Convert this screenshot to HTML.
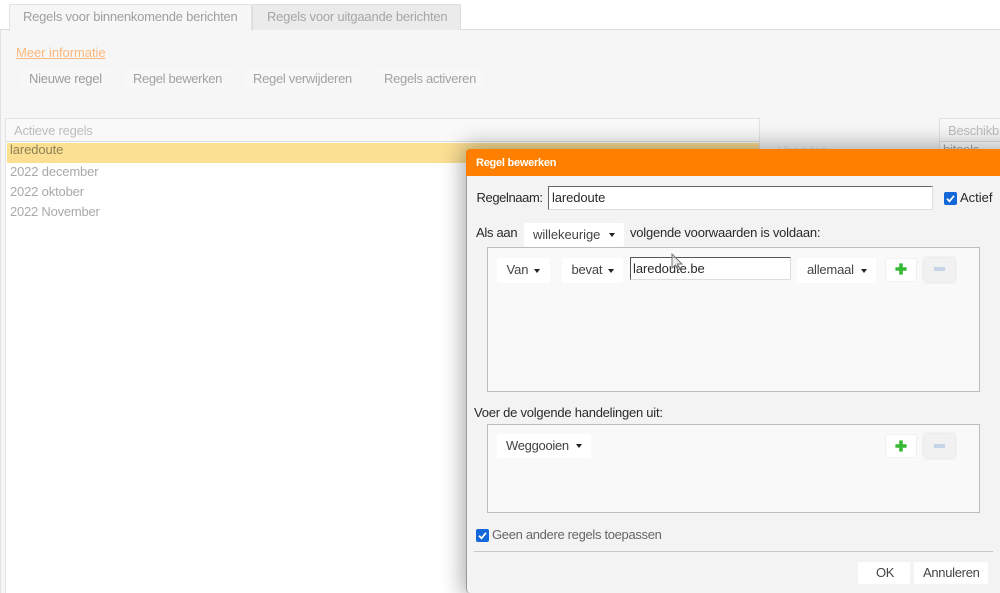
<!DOCTYPE html>
<html><head><meta charset="utf-8"><style>
html,body{margin:0;padding:0;width:1000px;height:593px;overflow:hidden;background:#fff}
body{position:relative;font-family:"Liberation Sans",sans-serif;font-size:13px;letter-spacing:-.22px}
.a{position:absolute;box-sizing:border-box}
.t{position:absolute;white-space:nowrap;line-height:16px}
.g{color:#a9a9a9}
.d{color:#2a2a2a}
.sel{position:absolute;box-sizing:border-box;background:#fff;border-radius:2px;color:#444}
.car{position:absolute;width:0;height:0;border-left:3.5px solid transparent;border-right:3.5px solid transparent;border-top:4px solid #222}
.cb{position:absolute;width:13px;height:13px;background:#1467d8;border-radius:2px}
.tb{position:absolute;box-sizing:border-box;background:#f7f7f7;border:1px solid #f4f4f4;border-radius:3px;top:66px;height:26px}
</style></head><body>
<div class="a" style="left:0;top:29px;width:1000px;height:564px;background:#f6f6f6;border-top:1px solid #dcdcdc;border-left:1px solid #e2e2e2"></div>
<div class="a" style="left:9px;top:4px;width:243px;height:27px;background:#f6f6f6;border:1px solid #e2e2e2;border-bottom:none;border-radius:2px 2px 0 0"></div>
<div class="a" style="left:252px;top:4px;width:209px;height:26px;background:#ebebeb;border:1px solid #dcdcdc;border-bottom:none;border-radius:2px 2px 0 0"></div>
<div class="t" style="left:23px;top:9px;color:#a0a0a0;letter-spacing:-.23px">Regels voor binnenkomende berichten</div>
<div class="t" style="left:267px;top:9px;color:#a6a6a6;letter-spacing:-.22px">Regels voor uitgaande berichten</div>
<div class="t" style="left:16px;top:45px;color:#fbb77a;text-decoration:underline;letter-spacing:-.05px">Meer informatie</div>
<div class="tb" style="left:18px;width:95px"></div>
<div class="tb" style="left:122px;width:111px"></div>
<div class="tb" style="left:243px;width:120px"></div>
<div class="tb" style="left:373px;width:112px"></div>
<div class="t" style="left:29px;top:71px;color:#9c9c9c;letter-spacing:-.25px">Nieuwe regel</div>
<div class="t" style="left:133px;top:71px;color:#a2a2a2;letter-spacing:-.35px">Regel bewerken</div>
<div class="t" style="left:253px;top:71px;color:#a2a2a2;letter-spacing:-.3px">Regel verwijderen</div>
<div class="t" style="left:384px;top:71px;color:#a2a2a2;letter-spacing:-.3px">Regels activeren</div>
<div class="a" style="left:5px;top:118px;width:755px;height:475px;background:#fff;border:1px solid #e2e2e2;border-bottom:none"></div>
<div class="a" style="left:6px;top:119px;width:753px;height:23px;background:#f9f9f9;border-bottom:1px solid #dcdcdc"></div>
<div class="t" style="left:14px;top:123px;color:#bdbdbd">Actieve regels</div>
<div class="a" style="left:7px;top:143px;width:752px;height:20px;background:#fbdf93"></div>
<div class="t" style="left:10px;top:142px;color:#8f8255;letter-spacing:-.1px">laredoute</div>
<div class="t g" style="left:10px;top:164px;letter-spacing:-.15px">2022 december</div>
<div class="t g" style="left:10px;top:184px;letter-spacing:-.17px">2022 oktober</div>
<div class="t g" style="left:10px;top:204px;letter-spacing:-.22px">2022 November</div>
<div class="a" style="left:939px;top:118px;width:61px;height:475px;background:#fff;border:1px solid #e2e2e2;border-right:none"></div>
<div class="a" style="left:940px;top:119px;width:60px;height:23px;background:#f7f7f7;border-bottom:1px solid #dcdcdc"></div>
<div class="t" style="left:948px;top:123px;color:#bdbdbd">Beschikb</div>
<div class="t g" style="left:943px;top:142px">bitools</div>
<div class="t" style="left:778px;top:143px;color:#dddddd">Voeg toe</div>

<div class="a" style="left:466px;top:149px;width:560px;height:444px;background:#f3f3f3;border-radius:4px 0 0 4px;box-shadow:0 0 22px 4px rgba(0,0,0,.32);border-left:1px solid #999"></div>
<div class="a" style="left:466px;top:149px;width:534px;height:27px;background:#ff8000;border-radius:4px 0 0 0"></div>
<div class="t" style="left:476px;top:155px;color:#fff;font-size:11px;font-weight:bold;letter-spacing:-.25px">Regel bewerken</div>

<div class="t d" style="left:476.5px;top:190px;letter-spacing:-.4px">Regelnaam:</div>
<div class="a" style="left:548px;top:186px;width:385px;height:24px;background:#fff;border:1px solid #ddd;border-top:1px solid #666;border-left:1px solid #666"></div>
<div class="t d" style="left:552px;top:190px;letter-spacing:-.1px">laredoute</div>
<div class="cb" style="left:944px;top:192px"><svg width="13" height="13" viewBox="0 0 13 13" style="display:block"><path d="M3 6.8 5.5 9.3 10 3.8" fill="none" stroke="#fff" stroke-width="1.8"/></svg></div>
<div class="t d" style="left:960px;top:190px;letter-spacing:0">Actief</div>

<div class="t d" style="left:476px;top:225px;letter-spacing:-.3px">Als aan</div>
<div class="sel" style="left:524px;top:223px;width:100px;height:24px"></div>
<div class="t" style="left:533px;top:227px;color:#444;letter-spacing:-.05px">willekeurige</div>
<div class="car" style="left:608.5px;top:233px"></div>
<div class="t d" style="left:630px;top:225px">volgende voorwaarden is voldaan:</div>

<div class="a" style="left:487px;top:247px;width:493px;height:145px;background:#f9f9f9;border:1px solid #bdbdbd"></div>
<div class="sel" style="left:497px;top:258px;width:53px;height:25px"></div>
<div class="t" style="left:506.5px;top:262px;color:#444;letter-spacing:-.1px">Van</div>
<div class="car" style="left:534px;top:269px"></div>
<div class="sel" style="left:562px;top:258px;width:61px;height:25px"></div>
<div class="t" style="left:571.5px;top:262px;color:#444;letter-spacing:-.2px">bevat</div>
<div class="car" style="left:607.5px;top:269px"></div>
<div class="a" style="left:630px;top:257px;width:161px;height:23px;background:#fff;border:1px solid #ddd;border-top:1px solid #555;border-left:1px solid #555"></div>
<div class="t d" style="left:633px;top:261px;letter-spacing:-.05px">laredoute.be</div>
<svg class="a" style="left:670px;top:253px" width="16" height="20" viewBox="0 0 16 20"><path d="M2 1V15L5.5 12 8 17 10 16 7.5 11H12Z" fill="#ddd" fill-opacity=".5" stroke="#777" stroke-width="1"/></svg>
<div class="sel" style="left:797px;top:258px;width:79px;height:25px"></div>
<div class="t" style="left:807px;top:262px;color:#444;letter-spacing:-.2px">allemaal</div>
<div class="car" style="left:860.5px;top:269px"></div>
<div class="a" style="left:885px;top:258px;width:32px;height:24px;background:#fff;border:1px solid #f1f1f1;border-radius:2px"></div>
<svg class="a" style="left:895px;top:263px" width="12" height="12" viewBox="0 0 12 12"><path d="M4.2 .8Q4.2 .4 4.6 .4H7.4Q7.8 .4 7.8 .8V4.2H11.2Q11.6 4.2 11.6 4.6V7.4Q11.6 7.8 11.2 7.8H7.8V11.2Q7.8 11.6 7.4 11.6H4.6Q4.2 11.6 4.2 11.2V7.8H.8Q.4 7.8 .4 7.4V4.6Q.4 4.2 .8 4.2H4.2Z" fill="#35b834"/></svg>
<div class="a" style="left:924px;top:258px;width:31px;height:24px;background:#f1f1f1;border-radius:3px;box-shadow:0 0 3px rgba(0,0,0,.14)"></div>
<div class="a" style="left:934px;top:267px;width:11px;height:4px;background:#c5d5e7"></div>

<div class="t d" style="left:474px;top:405px;letter-spacing:-.24px">Voer de volgende handelingen uit:</div>
<div class="a" style="left:487px;top:424px;width:493px;height:89px;background:#f9f9f9;border:1px solid #bdbdbd"></div>
<div class="sel" style="left:497px;top:434px;width:94px;height:24px"></div>
<div class="t" style="left:506px;top:438px;color:#444;letter-spacing:-.3px">Weggooien</div>
<div class="car" style="left:575.5px;top:444px"></div>
<div class="a" style="left:885px;top:434px;width:32px;height:24px;background:#fff;border:1px solid #f1f1f1;border-radius:2px"></div>
<svg class="a" style="left:895px;top:440px" width="12" height="12" viewBox="0 0 12 12"><path d="M4.2 .8Q4.2 .4 4.6 .4H7.4Q7.8 .4 7.8 .8V4.2H11.2Q11.6 4.2 11.6 4.6V7.4Q11.6 7.8 11.2 7.8H7.8V11.2Q7.8 11.6 7.4 11.6H4.6Q4.2 11.6 4.2 11.2V7.8H.8Q.4 7.8 .4 7.4V4.6Q.4 4.2 .8 4.2H4.2Z" fill="#35b834"/></svg>
<div class="a" style="left:924px;top:434px;width:31px;height:24px;background:#f1f1f1;border-radius:3px;box-shadow:0 0 3px rgba(0,0,0,.14)"></div>
<div class="a" style="left:934px;top:444px;width:11px;height:4px;background:#c5d5e7"></div>

<div class="cb" style="left:476px;top:529px"><svg width="13" height="13" viewBox="0 0 13 13" style="display:block"><path d="M3 6.8 5.5 9.3 10 3.8" fill="none" stroke="#fff" stroke-width="1.8"/></svg></div>
<div class="t" style="left:492px;top:527px;color:#666;letter-spacing:-.32px">Geen andere regels toepassen</div>
<div class="a" style="left:474px;top:551px;width:519px;height:1px;background:#c8c8c8"></div>
<div class="sel" style="left:858px;top:562px;width:52px;height:22px"></div>
<div class="t" style="left:876px;top:565px;color:#444;letter-spacing:-.3px">OK</div>
<div class="sel" style="left:914px;top:562px;width:74px;height:22px"></div>
<div class="t" style="left:923px;top:565px;color:#444;letter-spacing:-.3px">Annuleren</div>
</body></html>
